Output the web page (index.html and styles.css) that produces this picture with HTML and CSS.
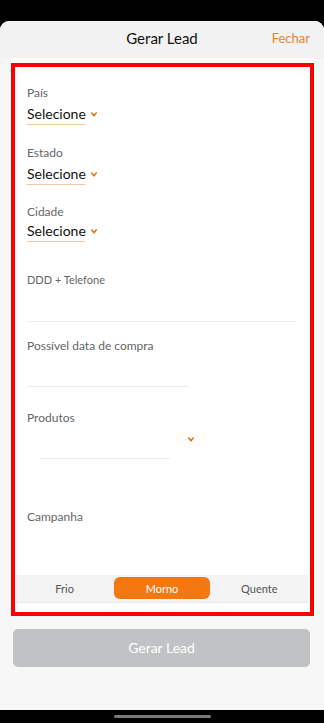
FILE: index.html
```html
<!DOCTYPE html>
<html lang="pt">
<head>
    <meta charset="UTF-8">
    <meta name="viewport" content="width=device-width, initial-scale=1.0">
    <title>Gerar Lead</title>
    <link rel="stylesheet" href="styles.css">
</head>
<body>
<div class="status"></div>

<div class="sheet">
    <!-- cabeçalho -->
    <div class="header">
        <span></span>
        <span class="header_title">Gerar Lead</span>
        <a href="javascript:;" class="header_close">Fechar</a>
    </div>

    <div class="card">
        <div class="frame">

            <div class="field f_pais">
                <div class="label">País</div>
                <div class="select">Selecione <svg class="chev" width="6" height="5" viewBox="0 0 6 5"><polyline points="0.8,1 3,3.8 5.2,1" /></svg></div>
            </div>

            <div class="field f_estado">
                <div class="label">Estado</div>
                <div class="select">Selecione <svg class="chev" width="6" height="5" viewBox="0 0 6 5"><polyline points="0.8,1 3,3.8 5.2,1" /></svg></div>
            </div>

            <div class="field f_cidade">
                <div class="label">Cidade</div>
                <div class="select sel_tight">Selecione <svg class="chev" width="6" height="5" viewBox="0 0 6 5"><polyline points="0.8,1 3,3.8 5.2,1" /></svg></div>
            </div>

            <div class="field f_tel">
                <div class="label label_small">DDD + Telefone</div>
                <div class="input input_tel"></div>
            </div>

            <div class="field f_data">
                <div class="label">Possível data de compra</div>
                <div class="input input_data"></div>
            </div>

            <div class="field f_prod">
                <div class="label">Produtos</div>
                <div class="prod_row">
                    <div class="prod_line"></div>
                    <div class="prod_chev"><svg class="chev" width="6" height="5" viewBox="0 0 6 5"><polyline points="0.8,1 3,3.8 5.2,1" /></svg></div>
                </div>
            </div>

            <div class="field f_camp">
                <div class="label">Campanha</div>
            </div>

            <!-- temperatura -->
            <div class="segment">
                <span class="segment_item">Frio</span>
                <span class="segment_item on">Morno</span>
                <span class="segment_item">Quente</span>
            </div>
        </div>
    </div>

    <a href="javascript:;" class="btn">Gerar Lead</a>
</div>

<div class="homebar"><span class="homebar_line"></span></div>
</body>
</html>
```

FILE: styles.css
```css
*{
    padding: 0;
    margin: 0;
    box-sizing: border-box;
}
body{
    background: #000;
    font-family: Lato, "Liberation Sans", sans-serif;
    width: 324px;
    height: 723px;
    overflow: hidden;
}
.status{
    height: 21px;
}
.sheet{
    height: 689px;
    background: #f7f7f7;
    border-radius: 9px 9px 0 0;
    overflow: hidden;
}

/* cabeçalho */
.header{
    height: 37px;
    padding-bottom: 3px;
    background: #f2f2f2;
    display: grid;
    grid-template-columns: 1fr auto 1fr;
    align-items: center;
}
.header_title{
    font-size: 15px;
    color: #111;
}
.header_close{
    justify-self: end;
    padding-right: 14px;
    font-size: 13px;
    color: #e8842c;
    text-decoration: none;
}

/* cartão */
.card{
    margin: 0 10px 0 11px;
    background: #fff;
    padding-top: 5px;
}
.frame{
    border: 4px solid #ff0000;
    padding: 0 14px 0 12px;
}
.label{
    font-size: 12px;
    line-height: 16px;
    color: #666;
}
.label_small{
    font-size: 11px;
}
.select{
    display: inline-flex;
    align-items: center;
    margin-top: 4px;
    font-size: 14px;
    line-height: 18px;
    color: #111;
    padding-bottom: 1px;
    border-bottom: 1px solid #ebcaa1;
    width: 58px;
    white-space: nowrap;
}
.sel_tight{
    margin-top: 1px;
}
.chev{
    margin-left: 5px;
    flex-shrink: 0;
}
.chev polyline{
    fill: none;
    stroke: #e07a1a;
    stroke-width: 1.6;
    stroke-linecap: round;
    stroke-linejoin: round;
}
.f_pais{ padding-top: 18px; }
.f_estado{ margin-top: 20px; }
.f_cidade{ margin-top: 19px; }
.f_tel{ margin-top: 30px; }
.f_data{ margin-top: 16px; }
.f_prod{ margin-top: 23px; }
.f_camp{ margin-top: 50px; }

.input{
    border-bottom: 1px solid #ececec;
}
.input_tel{
    height: 34px;
}
.input_data{
    height: 33px;
    width: 162px;
}
.prod_row{
    display: flex;
    align-items: flex-start;
    padding-left: 13px;
}
.prod_line{
    width: 130px;
    height: 33px;
    border-bottom: 1px solid #ececec;
}
.prod_chev{
    margin: 6px 0 0 6px;
    width: 30px;
    height: 14px;
    background: #fffdf8;
    display: flex;
    align-items: center;
    justify-content: center;
}
.prod_chev .chev{
    margin-left: 0;
}

/* segmento */
.segment{
    margin: 50px -12px 9px -11px;
    height: 28px;
    background: #f3f3f3;
    border-bottom: 1px solid #ebebeb;
    display: grid;
    grid-template-columns: repeat(3, 1fr);
    padding: 2px 0 3px;
}
.segment_item{
    display: flex;
    align-items: center;
    justify-content: center;
    font-size: 11px;
    color: #555;
    border-radius: 6px;
}
.segment_item.on{
    background: #f47812;
    color: #fff;
    margin: 0 1px;
}

/* botão */
.btn{
    display: block;
    margin: 13px 14px 0 13px;
    height: 38px;
    line-height: 38px;
    border-radius: 5px;
    background: #c1c2c4;
    color: #fff;
    text-align: center;
    font-size: 14px;
    text-decoration: none;
}

.homebar{
    height: 13px;
    display: flex;
    justify-content: center;
    padding-top: 5px;
}
.homebar_line{
    width: 97px;
    height: 3px;
    border-radius: 2px;
    background: #777;
}
```
